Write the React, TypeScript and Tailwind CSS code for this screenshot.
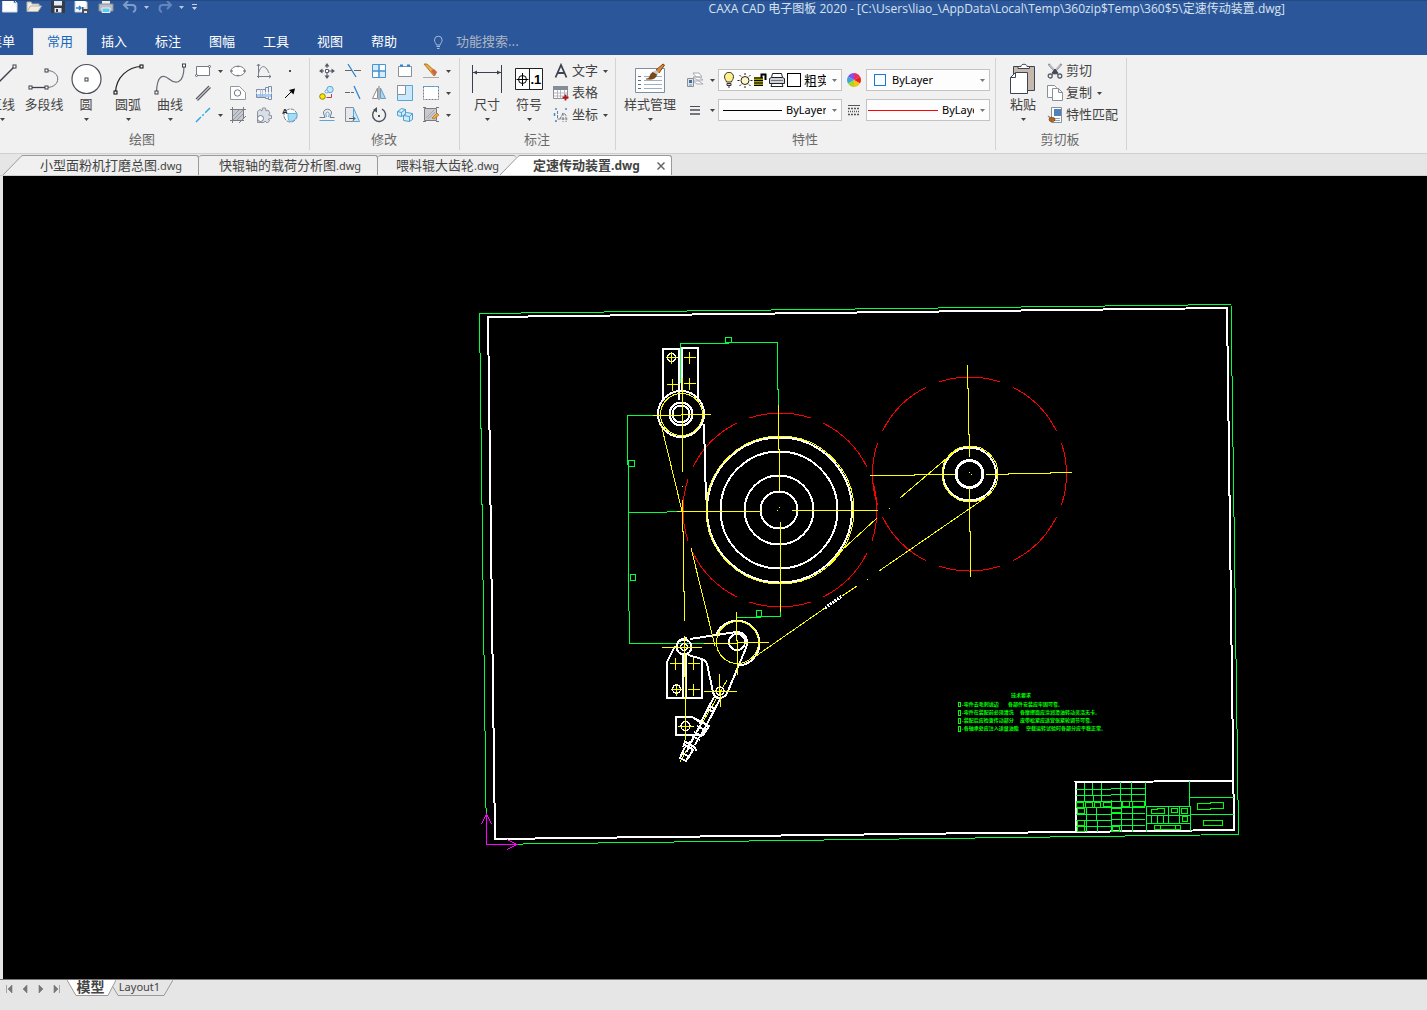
import React from 'react';
import clsx from 'clsx';

interface IconProps {
  children: React.ReactNode;
  size?: 16 | 32;
}

const Icon: React.FC<IconProps> = ({ children, size = 16 }) => (
  <svg
    viewBox={size === 16 ? '0 0 16 16' : '0 0 32 32'}
    className={clsx('shrink-0', size === 16 ? 'h-4 w-4' : 'h-8 w-8')}
    fill="none"
    stroke="#5a5f6b"
    aria-hidden="true"
  >
    {children}
  </svg>
);

const Caret: React.FC<{ className?: string }> = ({ className }) => (
  <svg viewBox="0 0 5 3" className={clsx('h-[3px] w-[5px] shrink-0', className)} aria-hidden="true">
    <path d="M0 0h5L2.5 3z" fill="currentColor" />
  </svg>
);

const Node: React.FC<{ x: number; y: number; color?: string }> = ({ x, y, color = '#3c3f4d' }) => (
  <rect x={x - 1.5} y={y - 1.5} width="3" height="3" fill="#fff" stroke={color} strokeWidth="1" />
);

// latin runs are set smaller than the Chinese around them
const Latin: React.FC<{ children: React.ReactNode }> = ({ children }) => (
  <span className="font-['Noto_Sans',sans-serif] text-[11px]">{children}</span>
);

/* ---------- large icons ---------- */

const lineIcon = (
  <Icon size={32}>
    <path d="M1 31 28 4" stroke="#3c3f4d" strokeWidth="1.5" />
    <Node x={28.5} y={3.5} />
  </Icon>
);
const polylineIcon = (
  <Icon size={32}>
    <path d="M18.500 7.500c15 0 15 17 0 17" stroke="#6a6e79" />
    <path d="M2.500 24.500h16" stroke="#3c3f4d" strokeWidth="1.300" />
    <Node x={2.5} y={24.5} />
    <Node x={18.5} y={7.5} />
    <Node x={18.5} y={24.5} />
  </Icon>
);
const circleIcon = (
  <Icon size={32}>
    <circle cx="16.500" cy="16" r="14.500" fill="#fff" stroke="#4b4f5c" strokeWidth="1.200" />
    <Node x={16.5} y={16.5} />
  </Icon>
);
const arcIcon = (
  <Icon size={32}>
    <path d="M3.500 29.500C4 14 16 4 29.500 3.500" stroke="#222" strokeWidth="1.200" />
    <Node x={3.5} y={29.5} color="#000" />
    <Node x={29.5} y={3.5} color="#000" />
  </Icon>
);
const splineIcon = (
  <Icon size={32}>
    <path d="M2.500 29.500C3 12 9 11 15 16s15 6 15-13" stroke="#666b77" strokeWidth="1.200" />
    <Node x={2.5} y={29.5} />
    <Node x={30} y={2.5} />
  </Icon>
);
const dimensionIcon = (
  <Icon size={32}>
    <path d="M1.500 2v28M30.500 2v28M2 9.500h28" stroke="#3c3f4d" />
    <path d="M2 9.500l4-2v4zM30 9.500l-4-2v4z" fill="#3c3f4d" stroke="none" />
  </Icon>
);
const symbolIcon = (
  <Icon size={32}>
    <path d="M2.500 5.500h27v21h-27zM16.500 5.500v21" fill="#fff" stroke="#222" />
    <circle cx="9.500" cy="16.500" r="4" stroke="#000" />
    <path d="M3.500 16.500h12M9.500 10v13" stroke="#000" />
    <text x="17.500" y="21" className="font-['Liberation_Sans'] text-[13px] font-bold" fill="#000" stroke="none">.1</text>
  </Icon>
);
const styleIcon = (
  <Icon size={32}>
    <path d="M1.500 5.500h29v24h-29z" fill="#fff" stroke="#7d90a3" />
    <path d="M10 13.500h18M10 17.500h18M10 21.500h18M10 25.500h18" stroke="#9fb0c2" />
    <path d="M4 13.500h4m-4 4h4m-4 4h4m-4 4h4" stroke="#5b6b80" strokeDasharray="3 1" />
    <path d="M22 7l7-6 1.500 1-5.500 8z" fill="#d98a3a" stroke="#7c4212" />
    <path d="M12 16c5 0 3-5 7-7l4 2c-1 5-5 6-11 5z" fill="#7c4a1a" stroke="#56300c" strokeWidth=".5" />
    <path d="M19 9l3-2 3 2.500-2 2z" fill="#c9c9c9" stroke="none" />
  </Icon>
);
const pasteIcon = (
  <Icon size={32}>
    <path d="M6.500 3.500h21v24h-21z" fill="#c5b9ab" stroke="#3d4555" />
    <path d="M12 3.500h2c0-3 6-3 6 0h2.500v2H11v-2z" fill="#fff" stroke="#3d4555" />
    <path d="M8.500 9.500h12v21h-17v-16z" fill="#fff" stroke="#3d4555" />
    <path d="M3.500 14.500h5v-5" stroke="#3d4555" />
  </Icon>
);

/* ---------- small icons ---------- */

const drawIcons = [
  <Icon>
    <path d="M1.500 3.500h13v9h-13z" fill="#fff" stroke="#777b87" />
    <circle cx="1.500" cy="12.500" r="1" fill="#fff" />
    <circle cx="14.500" cy="3.500" r="1" fill="#fff" />
  </Icon>,
  <Icon>
    <ellipse cx="8" cy="8" rx="7" ry="4.800" fill="#fff" stroke="#777b87" />
    <path d="M.5 7.500h2v1h-2zM13.500 7.500h2v1h-2zM7.500 3h1v1h-1zM7.500 12h1v1h-1z" fill="#777" stroke="#777" strokeWidth=".5" />
  </Icon>,
  <Icon>
    <path d="M2.500 1v14M1 13.500h14M2.500 10C5 2 9 1 13 10" stroke="#777b87" />
    <path d="M.8 3l1.700-2 1.700 2M13 11.800l2 1.700-2 1.700" stroke="#777b87" />
  </Icon>,
  <Icon>
    <path d="M7 7h2v2H7z" fill="#4a4d58" stroke="none" />
  </Icon>,
  <Icon>
    <path d="M1 14 14 1M2.500 15.500l13-13" stroke="#5a5d69" strokeWidth="1.300" />
  </Icon>,
  <Icon>
    <path d="M.5 1.500h9l6 6v7H.5z" fill="#fff" stroke="#9297a1" />
    <circle cx="7.500" cy="8" r="3.200" stroke="#777b87" />
  </Icon>,
  <Icon>
    <path d="M.5 4.500h9v8h-9zM9.500 2.500h3v11h-3zM12.500 1.500h3v13h-3z" fill="#eef4fb" stroke="#7d8da5" />
    <path d="M1 9h14v3H1z" fill="#a9cdf0" stroke="none" />
    <path d="M0 8h16" stroke="#fff" />
    <path d="M4.500 4v8M6.500 4v8" stroke="#a3b5cb" strokeWidth=".8" />
  </Icon>,
  <Icon>
    <path d="M3 13l7-7" stroke="#000" />
    <path d="M13 3.500l-1.500 6L7 5z" fill="#000" stroke="none" />
  </Icon>,
  <Icon>
    <path d="M1 15 15 1" stroke="#2aa5e0" strokeWidth="1.400" strokeDasharray="7 2 2 2" />
  </Icon>,
  <Icon>
    <path d="M2.500 2.500h11v11h-11z" fill="#c5c8ce" stroke="none" />
    <path d="M3 9l6-6M3 13 13 3M7 13l6-6" stroke="#9599a2" />
    <path d="M2.500 0v16M13.500 0v12M0 2.500h16M0 13.500h14M9 16l7-7" stroke="#777b85" />
  </Icon>,
  <Icon>
    <path d="M1.500 4.500 4 2.500l2 1.500.5-3h3l.5 3 2-1 2 3-1.500 2 3 .5v3l-3 .5 1 2-2.500 2-2-2-1 1.500H1.500z" fill="#d9dfe9" stroke="#8d929d" />
    <circle cx="4.500" cy="11.500" r="3" fill="#fff" stroke="#777b87" />
  </Icon>,
  <Icon>
    <circle cx="8.500" cy="8.500" r="6.500" fill="#fff" stroke="#777b87" strokeDasharray="4 1" />
    <path d="M6 6.500h9c0 5-3 8-7 8-2-1-2-5-2-8z" fill="#a6dcf5" stroke="#5fb4dc" />
    <text x="0" y="7" className="font-['Liberation_Sans'] text-[8px] font-bold" fill="#222" stroke="none">A</text>
  </Icon>,
];

const modifyIcons = [
  <Icon>
    <path d="M8 2v12M2 8h12" stroke="#555" strokeDasharray="3 1" />
    <path d="M8 0l2.500 3.500h-5zM8 16l2.500-3.500h-5zM0 8l3.500-2.500v5zM16 8l-3.500-2.500v5z" fill="#555a66" stroke="none" />
    <path d="M6.500 6.500h3v3h-3z" fill="#fff" />
  </Icon>,
  <Icon>
    <path d="M0 7.500h7M9 7.500h7" stroke="#666" strokeDasharray="7 1 1 1" />
    <path d="M3 1l8 13" stroke="#2e86d6" strokeWidth="1.300" />
  </Icon>,
  <Icon>
    <path d="M1.500 1.500h13v13h-13z" fill="#d5ecfb" stroke="#4a94d2" />
    <path d="M8 1.500v13M1.500 8h13" stroke="#4a94d2" strokeWidth="1.500" />
    <path d="M9 2h5v5H9zM2 9h5v5H2z" fill="#fff" stroke="none" />
  </Icon>,
  <Icon>
    <path d="M1.500 3.500h13v10h-13z" fill="#fff" stroke="#8b8f99" />
    <path d="M3 2.500h3M10 2.500h3" stroke="#2584db" strokeWidth="2" />
  </Icon>,
  <Icon>
    <path d="M1 1l3 0 9 8-2 4z" fill="#f2ab3b" stroke="#9b6a1c" strokeWidth=".8" />
    <path d="M8 8l3-2 3 3-2 4z" fill="#c76840" stroke="none" />
    <path d="M0 14.500h16" stroke="#a9a9a9" />
  </Icon>,
  <Icon>
    <circle cx="3.500" cy="11.500" r="2.800" fill="#ffe600" stroke="#8c8000" />
    <circle cx="11" cy="4.500" r="3.200" fill="#c8e6fa" stroke="#58a6d8" />
    <circle cx="7.500" cy="6.500" r="1.500" fill="#fff" stroke="#58a6d8" />
    <path d="M7.500 12.500h5V9" stroke="#b4413c" />
  </Icon>,
  <Icon>
    <path d="M0 7.500h9" stroke="#666" strokeDasharray="5 1 3 1" />
    <path d="M9 1l6 13" stroke="#2e86d6" strokeWidth="1.300" />
  </Icon>,
  <Icon>
    <path d="M6.500 3v10.500h-5z" fill="#fff" stroke="#8b8f99" />
    <path d="M9.500 3v10.500h5z" fill="#a8d6f4" stroke="#6c9ec2" />
    <path d="M8 1v14" stroke="#777" />
  </Icon>,
  <Icon>
    <path d="M.5 .5h15v15H.5z" fill="#c8eafc" stroke="#5da4d6" />
    <path d="M.5 .5h8v9h-8z" fill="#fff" stroke="#8b8f99" />
  </Icon>,
  <Icon>
    <path d="M.5 1.500h15v13H.5z" fill="#fff" stroke="#777b87" strokeDasharray="2 1" />
    <path d="M.5 1.500h15" stroke="#4ca0e0" strokeDasharray="3 1" />
  </Icon>,
  <Icon>
    <path d="M.5 10.500H6L4.500 6c0-5 8-5 8 0L11 10.500h4.500" stroke="#777b87" />
    <path d="M.5 13.500h15M7.500 10c-1-3-1-5 1-5s2 2 1 5" stroke="#5aa5d6" />
  </Icon>,
  <Icon>
    <path d="M.5 .5h8v14h-8z" fill="#e6e8ec" stroke="#8b8f99" />
    <path d="M8.500 1l6 13.500h-6z" fill="#c8eafc" stroke="#5da4d6" />
    <path d="M4 11.500h6m-2-2 2 2-2 2" stroke="#555" />
  </Icon>,
  <Icon>
    <path d="M4 3a6.500 6.500 0 1 0 7-.8" stroke="#4c505c" strokeWidth="1.400" />
    <path d="M6 0v5.500L2 3z" fill="#4c505c" stroke="none" />
    <path d="M7 8h2v2H7z" fill="#4c505c" stroke="none" />
  </Icon>,
  <Icon>
    <path d="M.5 4.500l4-3 4 1v5l-4 2-4-1zM6.500 8.500l3-3 6 1v6l-3 2-6-1z" fill="#d2ecfb" stroke="#4c9ed2" />
    <path d="M6.500 8.500l6 1v5M12.500 9.500l3-3M.5 4.500l4 1v4M4.500 5.500l4-3" stroke="#4c9ed2" />
  </Icon>,
  <Icon>
    <path d="M1.500 1.500h12v12h-12z" fill="#c9c9cb" stroke="#777b87" />
    <path d="M0 .5h3M13 .5h3M0 14.500h3M13 14.500h3" stroke="#777" />
    <path d="M3 11l8-8M5 12l7-7" stroke="#a5a5a8" />
    <path d="M9 11l5-5 2 2-5 4z" fill="#f0aa3c" stroke="#a2702a" strokeWidth=".7" />
  </Icon>,
];

const letterIcon = (
  <Icon>
    <path d="M2.500 14.500 8 2l5.500 12.500M4.500 10h7" stroke="#3f4350" strokeWidth="1.800" />
  </Icon>
);
const tableIcon = (
  <Icon>
    <path d="M.5 1.500h14v12H.5z" fill="#fff" stroke="#8b8f99" />
    <path d="M0 1h15v4H0z" fill="#848c98" stroke="none" />
    <path d="M1 8h13M1 11h13M4.500 5v9M7.500 5v9M11.500 5v9" stroke="#a4a8b0" strokeWidth=".8" />
    <path d="M12.500 9.500v6M9.500 12.500h6" stroke="#b01818" strokeWidth="1.800" />
  </Icon>
);
const coordIcon = (
  <Icon>
    <path d="M4.500 4v8h10M2 14.500h1M7 12l3-6 3 2v7M10 6v9" stroke="#777b87" strokeDasharray="3 1" />
    <path d="M2 2h2M12 2h2M1.500 6v3M2 14h2" stroke="#3f8fd0" strokeWidth="1.500" />
  </Icon>
);
const cutIcon = (
  <Icon>
    <path d="M1.500 1l10 11M14.500 1l-10 11" stroke="#8b8f99" strokeWidth="2" />
    <path d="M2.500 2l9 9M13.500 2l-9 9" stroke="#f7f7f7" strokeWidth=".8" />
    <path d="M5 10l3-4 3 4-3 1z" fill="#444854" stroke="#444854" />
    <circle cx="3.200" cy="13" r="2" strokeWidth="1.300" />
    <circle cx="12.800" cy="13" r="2" strokeWidth="1.300" />
  </Icon>
);
const copyIcon = (
  <Icon>
    <path d="M.5 .5h7l2 2v10h-9z" fill="#fff" stroke="#8b8f99" />
    <path d="M5.500 3.500h6l4 4v8h-10zM11.500 3.500v4h4" fill="#fff" stroke="#8b8f99" />
  </Icon>
);
const matchIcon = (
  <Icon>
    <path d="M4.500 .5h10v15h-10z" fill="#fff" stroke="#8b8f99" />
    <path d="M7 2h7v7H7z" fill="#4f82bd" stroke="none" />
    <path d="M7 11.500h6M7 13.500h6" stroke="#8aa4c0" />
    <path d="M1 9l4 3" stroke="#8a8a8a" strokeWidth="1.500" />
    <ellipse cx="5" cy="12.500" rx="3" ry="2.200" fill="#b0651b" stroke="#7b410a" strokeWidth=".6" />
  </Icon>
);

const layerIcon = (
  <Icon>
    <path d="M6 1h6l3 4H9zM6 5h6l4 3h-6zM6 9h6l4 3h-6z" fill="#fff" stroke="#9da1aa" strokeWidth=".9" />
    <path d="M.5 6.500h6v8h-6z" fill="#dfe3ea" stroke="#8b8f99" />
    <path d="M2 8h3v3H2z" fill="#3c6ea8" stroke="none" />
    <path d="M2 13h3" stroke="#8b8f99" />
  </Icon>
);
const linesIcon = (
  <Icon>
    <path d="M3 4.500h10" stroke="#4b4e58" />
    <path d="M3 8h10M3 12h10" stroke="#4b4e58" strokeWidth="1.500" />
  </Icon>
);
const wheelSlices = [
  { color: '#e52e6a', d: 'M8 8V1a7 7 0 0 1 6 3.500z' },
  { color: '#e8231c', d: 'M8 8l6-3.500a7 7 0 0 1 0 7z' },
  { color: '#f5c21c', d: 'M8 8l6 3.500A7 7 0 0 1 8 15z' },
  { color: '#a8d822', d: 'M8 8v7a7 7 0 0 1-6-3.500z' },
  { color: '#35a8d8', d: 'M8 8l-6 3.500a7 7 0 0 1 0-7z' },
  { color: '#8a4fe6', d: 'M8 8 2 4.500A7 7 0 0 1 8 1z' },
];
const wheelIcon = (
  <Icon>
    {wheelSlices.map(({ color, d }) => (
      <path key={color} d={d} fill={color} stroke="none" />
    ))}
  </Icon>
);
const linetypeIcon = (
  <Icon>
    <path d="M2 3.500h12" stroke="#555" />
    <path d="M2 6.500h12M2 12.500h12" stroke="#555" strokeWidth="1.400" strokeDasharray="2 1" />
    <path d="M2 9.500h12" stroke="#555" strokeWidth="1.400" strokeDasharray="1 1" />
  </Icon>
);
const bulbIcon = (
  <Icon>
    <path d="M5.500 10C5 8 3.500 7 3.500 4.800a4.500 4.500 0 0 1 9 0C12.500 7 11 8 10.500 10z" fill="#fff08a" stroke="#333" />
    <path d="M6 11.500h4v2H6zM7 15h2" fill="#ddd" stroke="#333" />
  </Icon>
);
const sunIcon = (
  <Icon>
    <circle cx="8" cy="8.500" r="4" fill="#fff7c8" stroke="#222" />
    <path d="M8 1v2M8 14v2M.5 8.500h2M13.500 8.500h2M2.500 3l1.500 1.500M12 12.500l1.500 1.500M13.500 3 12 4.500M4 12.500 2.500 14" stroke="#222" />
  </Icon>
);
const lockIcon = (
  <Icon>
    <path d="M1 5h9v9H1z" fill="#a0a000" stroke="none" />
    <path d="M1 6h9M1 8.500h9M1 11h9M1 13.500h9" stroke="#000" strokeWidth="1.200" />
    <path d="M8.500 6V2.500h4V8" stroke="#000" strokeWidth="2" />
  </Icon>
);
const printIcon = (
  <Icon>
    <path d="M3.500 1.500h9l1 4h-11z" fill="#fff" stroke="#222" />
    <path d="M.5 6.500l2-1h11l2 1v5h-15z" fill="#cfd3da" stroke="#222" />
    <path d="M3 11.500h10l1 3H2z" fill="#fff" stroke="#222" />
    <path d="M2 8.500h12" stroke="#777" />
  </Icon>
);

/* ---------- title bar ---------- */

const quickActions = [
  {
    name: '新建',
    icon: <path d="M.5 .5h11l3.500 3.500v9H.5zM11.500 .5v3.500h3.500" fill="#fff" stroke="#d5dbe6" />,
  },
  {
    name: '打开',
    icon: <path d="M1 12V3h4l1 2h7v2M1 12.500 4.500 7h11L12 12.500z" fill="#f4ecdc" stroke="#b5b5b5" />,
  },
  {
    name: '保存',
    icon: (
      <>
        <path d="M1.500 1h13v12.500h-13z" fill="#353a48" stroke="#353a48" />
        <path d="M4 1h8v5.500H4zM4.500 9h7v4.500h-7z" fill="#e7eaf0" stroke="none" />
        <path d="M6 10h2v3H6z" fill="#353a48" stroke="none" />
      </>
    ),
  },
  {
    name: '另存为',
    icon: (
      <>
        <path d="M1 .5h9l3 3V13H1z" fill="#fff" stroke="#c5cad2" />
        <path d="M2 9h5m-2-2 2 2-2 2" stroke="#2f7fd1" strokeWidth="1.500" />
        <path d="M8 8h7v6H8z" fill="#4a4f5b" stroke="none" />
        <path d="M9.500 8h4v2h-4zM10 12h3v2h-3z" fill="#e3e3e3" stroke="none" />
      </>
    ),
  },
  {
    name: '打印',
    icon: (
      <>
        <path d="M4 0h8v5H4z" fill="#f2eee7" stroke="none" />
        <path d="M1 5h14v7H1z" fill="#b9bdc4" stroke="#8b8f97" />
        <path d="M4 9h8v4.500H4z" fill="#5bcbf2" stroke="#e9eef3" />
      </>
    ),
  },
];

const TitleBar: React.FC = () => (
  <header className="flex h-7 items-start overflow-hidden border-t border-[#244a83] text-[#d9e2f0]">
    <div className="flex h-3 min-w-0 flex-1 items-center gap-2 pl-[2px]">
      {quickActions.map((action) => (
        <button key={action.name} type="button" aria-label={action.name}>
          <Icon>{action.icon}</Icon>
        </button>
      ))}
      <button type="button" aria-label="撤销" className="flex items-center gap-[6px]">
        <Icon>
          <path d="M6 2 2 6l4 4M2.500 6H10c5 0 4 6 1 7" stroke="#7f9bc9" strokeWidth="2" />
        </Icon>
        <Caret className="text-[#b9c8e0]" />
      </button>
      <button type="button" aria-label="重做" className="flex items-center gap-[6px]">
        <Icon>
          <path d="M10 2l4 4-4 4M13.500 6H6c-5 0-4 6-1 7" stroke="#6486bd" strokeWidth="2" />
        </Icon>
        <Caret className="text-[#b9c8e0]" />
      </button>
      <button type="button" aria-label="自定义" className="flex flex-col items-center gap-[2px]">
        <span className="h-px w-[5px] bg-[#c8d3e6]" />
        <Caret className="text-[#c8d3e6]" />
      </button>
    </div>
    <h1 className="shrink-0 pr-[142px] font-['Open_Sans','Noto_Sans_CJK_SC',sans-serif] text-[12px] leading-4 whitespace-nowrap">
      CAXA CAD 电子图板 2020 - [C:\Users\liao_\AppData\Local\Temp\360zip$Temp\360$5\定速传动装置.dwg]
    </h1>
  </header>
);

const menus = ['插入', '标注', '图幅', '工具', '视图', '帮助'];

const MenuBar: React.FC = () => (
  <nav className="-ml-[25px] flex h-[27px] items-stretch text-white">
    <button type="button" className="mr-1 w-[54px] pb-[2px]">菜单</button>
    <button type="button" className="w-[54px] border border-b-0 border-[#d9dde5] bg-[#f1f1f1] pb-[2px] text-[#1768c0]">常用</button>
    {menus.map((menu) => (
      <button key={menu} type="button" className="w-[54px] pb-[2px]">{menu}</button>
    ))}
    <div className="ml-[19px] flex items-center gap-[10px]">
      <Icon>
        <path d="M6.500 11C6 9 4.500 8.500 4.500 6a3.800 3.800 0 0 1 7.600 0c0 2.500-1.600 3-2 5zM6.500 12.500h3.500M7 14.500h2.500" stroke="#a9b9d6" />
      </Icon>
      <input aria-label="功能搜索" placeholder="功能搜索..." className="w-24 bg-transparent pb-[2px] outline-none placeholder:text-[#aeb6c3]" />
    </div>
  </nav>
);

/* ---------- ribbon ---------- */

interface ToolProps {
  icon: React.ReactNode;
  label: string;
  caret?: boolean;
  wide?: boolean;
}

const BigTool: React.FC<ToolProps> = ({ icon, label, caret = true, wide = false }) => (
  <button type="button" className={clsx('flex flex-col items-center pt-[3px] whitespace-nowrap', wide ? 'w-[60px]' : 'w-[42px]')}>
    {icon}
    <span className="mt-px leading-4">{label}</span>
    {caret && <Caret className="mt-[6px]" />}
  </button>
);

const RowTool: React.FC<ToolProps> = ({ icon, label, caret = false }) => (
  <button type="button" className="flex h-[22px] items-center gap-[3px] whitespace-nowrap">
    {icon}
    <span className="pb-[2px]">{label}</span>
    {caret && <Caret className="ml-[2px]" />}
  </button>
);

const Group: React.FC<{ title: string; className?: string; children: React.ReactNode }> = ({ title, className, children }) => (
  <section className={clsx('flex flex-col border-r border-[#d4d4d4] pt-[2px]', className)}>
    <div className="flex h-[70px]">{children}</div>
    <h2 className="mt-px text-center leading-4 text-[#6a6a6a]">{title}</h2>
  </section>
);

interface ComboProps {
  name: string;
  value: string;
  className?: string;
  children: React.ReactNode;
}

const Combo: React.FC<ComboProps> = ({ name, value, className = "font-['Noto_Sans',sans-serif] text-[11px]", children }) => (
  <div className="flex h-[22px] w-[124px] items-center border border-[#c3c3c3] bg-[#fdfdfd] text-black">
    {children}
    <select aria-label={name} className={clsx('h-full min-w-0 flex-1 appearance-none overflow-hidden bg-transparent outline-none', className)}>
      <option>{value}</option>
    </select>
    <Caret className="mr-1 ml-[6px] text-[#777]" />
  </div>
);

const Ribbon: React.FC = () => (
  <div className="flex h-[99px] items-stretch overflow-hidden border-b border-[#d0d0d0] bg-[#f1f1f1] py-[3px] text-[#444]">
    <Group title="绘图" className="-ml-[25px] pr-[6px] pl-[6px]">
      <BigTool icon={lineIcon} label="直线" />
      <BigTool icon={polylineIcon} label="多段线" caret={false} />
      <BigTool icon={circleIcon} label="圆" />
      <BigTool icon={arcIcon} label="圆弧" />
      <BigTool icon={splineIcon} label="曲线" />
      <div className="grid h-[66px] grid-cols-[34px_26px_26px_26px] grid-rows-3">
        {drawIcons.map((icon, i) => (
          <button
            key={i}
            type="button"
            aria-label={`绘图工具 ${i + 1}`}
            className={clsx('flex items-center', i % 4 === 0 ? 'gap-[7px] pl-1' : 'justify-center')}
          >
            {icon}
            {(i === 0 || i === 8) && <Caret />}
          </button>
        ))}
      </div>
    </Group>

    <Group title="修改" className="pr-[5px] pl-1">
      <div className="grid h-[66px] grid-cols-[26px_26px_26px_26px_36px] grid-rows-3">
        {modifyIcons.map((icon, i) => (
          <button
            key={i}
            type="button"
            aria-label={`修改工具 ${i + 1}`}
            className={clsx('flex items-center', i % 5 === 4 ? 'gap-[7px] pl-[5px]' : 'justify-center')}
          >
            {icon}
            {i % 5 === 4 && <Caret />}
          </button>
        ))}
      </div>
    </Group>

    <Group title="标注" className="pr-[7px] pl-[6px]">
      <BigTool icon={dimensionIcon} label="尺寸" />
      <BigTool icon={symbolIcon} label="符号" />
      <div className="flex flex-col pl-[3px]">
        <RowTool icon={letterIcon} label="文字" caret />
        <RowTool icon={tableIcon} label="表格" />
        <RowTool icon={coordIcon} label="坐标" caret />
      </div>
    </Group>

    <Group title="特性" className="pr-[5px] pl-1">
      <BigTool icon={styleIcon} label="样式管理" wide />
      <div className="flex flex-col gap-2 pt-[9px] pl-[7px]">
        <div className="flex items-center">
          <button type="button" aria-label="图层管理" className="flex w-[31px] items-center gap-[7px]">
            {layerIcon}
            <Caret />
          </button>
          <Combo name="图层" value="粗实线" className="pb-px">
            <span className="flex w-[85px] shrink-0 items-center pl-[2px]">
              {bulbIcon}
              {sunIcon}
              {lockIcon}
              {printIcon}
              <span className="ml-[2px] h-[14px] w-[14px] border border-black bg-white" />
            </span>
          </Combo>
          <span className="flex w-6 justify-center">{wheelIcon}</span>
          <Combo name="颜色" value="ByLayer">
            <span className="mr-[6px] ml-[7px] h-3 w-3 shrink-0 border border-[#1679d3]" />
          </Combo>
        </div>
        <div className="flex items-center">
          <button type="button" aria-label="线型管理" className="flex w-[31px] items-center gap-[7px]">
            {linesIcon}
            <Caret />
          </button>
          <Combo name="线型" value="ByLayer">
            <span className="mr-1 ml-1 h-px w-[59px] shrink-0 bg-black" />
          </Combo>
          <span className="flex w-6 justify-center">{linetypeIcon}</span>
          <Combo name="线宽" value="ByLayer">
            <span className="mr-1 ml-px h-px w-[70px] shrink-0 bg-[#f00]" />
          </Combo>
        </div>
      </div>
    </Group>

    <Group title="剪切板" className="pr-2 pl-[6px]">
      <BigTool icon={pasteIcon} label="粘贴" />
      <div className="flex flex-col pl-[3px]">
        <RowTool icon={cutIcon} label="剪切" />
        <RowTool icon={copyIcon} label="复制" caret />
        <RowTool icon={matchIcon} label="特性匹配" />
      </div>
    </Group>
  </div>
);

/* ---------- document tabs ---------- */

const Slant: React.FC<{ fill: string }> = ({ fill }) => (
  <svg viewBox="0 0 20 20" className="h-5 w-5 shrink-0" aria-hidden="true">
    <path d="M0 20 18 1.500Q19 .5 20 .5V20z" fill={fill} />
    <path d="M0 20 18 1.500Q19 .5 20 .5" fill="none" stroke="#9a9a9a" />
  </svg>
);

const DocumentTabs: React.FC = () => (
  <div className="flex h-[22px] items-end border-b border-[#cfcfcf] pl-[3px] text-[#444]">
    <button type="button" className="flex">
      <Slant fill="#f0f0f0" />
      <span className="h-5 w-[176px] rounded-tr-[3px] border-t border-r border-[#9a9a9a] bg-[#f0f0f0] pl-[17px] text-left">
        小型面粉机打磨总图<Latin>.dwg</Latin>
      </span>
    </button>
    <button type="button" className="h-5 w-[179px] rounded-t-[3px] border-t border-r border-[#9a9a9a] bg-[#f0f0f0] pl-5 text-left">
      快辊轴的载荷分析图<Latin>.dwg</Latin>
    </button>
    <button type="button" className="h-5 w-[138px] rounded-t-[3px] border-t border-[#9a9a9a] bg-[#f0f0f0] pl-[18px] text-left">
      喂料辊大齿轮<Latin>.dwg</Latin>
    </button>
    <div className="-ml-4 flex">
      <Slant fill="#fff" />
      <div className="flex h-5 w-[152px] items-center justify-between rounded-tr-[3px] border-t border-r border-[#9a9a9a] bg-white pr-[6px] pl-[13px]">
        <button type="button" className="pb-px font-bold">
          定速传动装置<span className="font-['Noto_Sans',sans-serif] text-[12px]">.dwg</span>
        </button>
        <button type="button" aria-label="关闭">
          <svg viewBox="0 0 8 8" className="h-2 w-2" aria-hidden="true">
            <path d="M.5 .5l7 7M7.500 .5l-7 7" stroke="#666" strokeWidth="1.500" />
          </svg>
        </button>
      </div>
    </div>
  </div>
);

/* ---------- drawing ---------- */

const Cross: React.FC<{ x: number; y: number; r?: number }> = ({ x, y, r = 6 }) => (
  <path d={`M${x - r} ${y}h${r * 2}M${x} ${y - r}v${r * 2}`} />
);

const notes = [
  { y: 706, first: '零件去毛刺锐边', x: 1008, second: '各部件安装应牢固可靠。' },
  { y: 714, first: '零件在装配前必须清洗', x: 1020, second: '各摩擦面应涂润滑油转动灵活无卡。' },
  { y: 722, first: '装配后应检查传动部分', x: 1020, second: '皮带松紧应适宜张紧轮调节可靠。' },
  { y: 730, first: '各轴承处应注入适量油脂', x: 1026, second: '空载运转试验时各部分应平稳正常。' },
];

const Drawing: React.FC = () => (
  <svg
    viewBox="3 176 1424 803"
    preserveAspectRatio="xMinYMin meet"
    className="ml-[3px] min-h-0 flex-1 bg-black"
    fill="none"
    shapeRendering="crispEdges"
    role="img"
    aria-label="定速传动装置"
  >
    {/* sheet border */}
    <path d="M479.500 313.500 1231 304.500 1238.500 834.500 486.500 844.500z" stroke="#00ff40" />
    <path d="M488 317 1227 308 1234 830 495 839z" stroke="#fff" strokeWidth="2" />

    {/* origin axes */}
    <path d="M486.500 814v30.500h31M481.500 824l5-10 5 10M507 839.500l10 5-10 5" stroke="#f0f" />

    {/* dimensions */}
    <g stroke="#00ff40">
      <path d="M680.500 383v-40h48v-1h49v31l1 32M725.500 337.500h6v5h-6z" />
      <path d="M653 415.500h-26v49h1v81l1 65 1 33H704M628 512.500h24l30-1" />
      <path d="M628.500 460.500h6v6h-6zM630.500 574.500h5v6h-5z" />
      <path d="M736.500 617.500h24v-1h20v-5M756.500 610.500h5v6h-5z" />
    </g>

    {/* pitch circles */}
    <g stroke="#f00">
      <circle cx="780" cy="510" r="97" pathLength="360" strokeDasharray="37 8" strokeDashoffset="18.5" />
      <circle cx="969.5" cy="474" r="97" pathLength="360" strokeDasharray="37 8" strokeDashoffset="18.5" />
    </g>

    {/* part outlines */}
    <path d="M727 680l-47 82" stroke="#ff0" />
    <g stroke="#fff" strokeWidth="2">
      <path d="M663 400v-51h16v51M682 391v-43h16v52M704 424l2 76" />
      <circle cx="671.500" cy="357.500" r="4" strokeWidth="1.500" />
      <circle cx="681" cy="414" r="23" />
      <circle cx="681" cy="414" r="11.500" />
      <circle cx="681" cy="414" r="8.500" />

      <circle cx="779.500" cy="510" r="72.500" />
      <circle cx="779" cy="510" r="58.500" />
      <circle cx="779" cy="510" r="34.500" />
      <circle cx="779" cy="510" r="18.500" />

      <circle cx="969.500" cy="474" r="26.500" />
      <circle cx="969.500" cy="474" r="13.500" strokeWidth="3" />
      <path d="M825 608l17-12" strokeWidth="3" strokeDasharray="2 1" />

      <path d="M716 635a22.500 22.500 0 1 1 24 30.500" />
      <circle cx="737" cy="642" r="8" />
      <path d="M690 639l46-7c9 0 13 7 10 16l-18 43c-3 9-13 9-15 1l-6-28c-1-3-3-4-5-5l-14-4" />
      <circle cx="684" cy="647" r="7.500" />
      <circle cx="684" cy="647" r="3.500" strokeWidth="1.500" />
      <path d="M675 646l-8 16v36h35v-39M683 655v43M686 655v43M677 646q0-7 10-8" />
      <circle cx="676.500" cy="689" r="4" strokeWidth="1.500" />
      <circle cx="720" cy="691" r="4" strokeWidth="1.500" />
      <circle cx="685.500" cy="726" r="4.500" strokeWidth="1.500" />

      <path d="M714 697l-14 27M720 699l-14 27M709 706l7 3M707 709l7 3" />
      <path d="M692 717h-16v18h27l6-9-17-9 8 5" />
      <path d="M702 722l-7 13M706 726l-6 11M697 726l8 4M694 732l8 4M692 736l8 4" />
      <path d="M684 741l12 7M683 744l11 6M685 742l-2 5M695 747l1 4M685 747l-5 11 6 3 7-11M682 753l8 4M690 741l-3 11" />
      <path d="M695 735l-5 9M699 737l-4 8" />
    </g>

    {/* centre lines and belt */}
    <g stroke="#ff0">
      <path d="M653 415.500h28M681 414.500h30M682.500 378v94M682.500 486v1M682.500 500v31h1v60h1v30" />
      <path d="M677 511.500h85M792 510.500h86M778.500 405v44h1v42M780.500 522v90M777 510.500h1M779 507.500h1" />
      <path d="M870 475.500h44v-1h41M986 474.500h22v-1h42v-1h22M967.500 365v23h1v46h1v23M969.500 488v43h1v46M969 472.500h1M971 474.500h1" />
      <path d="M661 424l21 87M683 533h1M691 548l24 98M960 447l-60 51M889 508.500h1M877 518l-36 33-12 14" />
      <path d="M985 498 879 571M867 579.500h1M857 586l-15 10M825 608l-69 48" />
      <path d="M736.500 612v28h1v35M704 643.500h33v-1h32M662 647.500h40M684.500 636v40h1v64" />
      <path d="M704 691.500h33M719.500 674v16h1v17" />
      <circle cx="681.500" cy="414.500" r="21" />
      <circle cx="780" cy="510" r="74" />
      <circle cx="970" cy="474" r="28" />
      <circle cx="737.500" cy="642.500" r="21" />
      <Cross x={671.5} y={357.5} />
      <Cross x={689.5} y={357.5} />
      <Cross x={672.5} y={384.5} />
      <Cross x={689.5} y={383.5} />
      <Cross x={675.5} y={663.5} />
      <Cross x={693.5} y={663.5} />
      <Cross x={676.5} y={689.5} />
      <Cross x={693.5} y={689.5} />
      <Cross x={685.5} y={726.5} r={8} />
    </g>

    {/* title block */}
    <path d="M1075.500 831v-48.500l158-2" stroke="#fff" strokeWidth="2" />
    <g stroke="#00ff40">
      <path d="M1076 789.500h35M1076 795.500h35M1076 801.500h35M1076 807.500h35M1076 814.500h35M1076 820.500h35M1076 826.500h35" />
      <path d="M1111 788.500h34M1111 794.500h34M1111 801.500h34M1111 807.500h34M1111 813.500h34M1111 819.500h34M1111 825.500h34" />
      <path d="M1084.500 783v18M1092.500 783v12M1093.500 795v6M1101.500 783v18M1086.500 808v24M1096.500 808v12M1097.500 820v12" />
      <path d="M1111.500 800v32M1120.500 782v20M1121.500 802v30M1131.500 782v20M1132.500 802v30M1145.500 782v24M1146.500 806v26" />
      <path d="M1146 806.500h44M1146 815.500h44M1146 823.500h44M1168.500 806v17M1179.500 806v17M1151.500 815v8M1157.500 815v8M1163.500 815v8" />
      <path d="M1189.500 781v25h1v25M1190 797.500h44M1190 814.500h44" />
    </g>
    <g stroke="#00ff00">
      <path d="M1076.500 802.500h7v5h-7zM1085.500 802.500h7v5h-7zM1094.500 802.500h6v5h-6zM1103.500 802.500h8v4h-8zM1122.500 801.500h7v5h-7zM1132.500 801.500h12v5h-12z" />
      <path d="M1077.500 808.500h7v5h-7zM1111.500 808.500h10v4h-10zM1077.500 820.500h7v5h-7zM1077.500 826.500h7v5h-7zM1112.500 826.500h7v5h-7z" />
      <path d="M1151.500 809.500h6v-1h7v5h-13zM1171.500 808.500h6v4h-6zM1181.500 808.500h6v5h-6zM1182.500 816.500h5v5h-5zM1154.500 825.500h26v4h-26zM1160.500 825v4M1175.500 825v4" />
      <path d="M1197.500 803.500h13v-1h13v6h-13v1h-13zM1203.500 820.500h19v5h-19z" />
      <path d="M958.500 702.500h2v4h-2zM958.500 710.500h2v5h-2zM958.500 718.500h2v5h-2zM958.500 726.500h2v5h-2z" />
    </g>
    <g fill="#00ff00" className="font-['Noto_Sans_CJK_SC',sans-serif] text-[5px] font-bold">
      <text x="1011" y="697">技术要求</text>
      {notes.map((note) => (
        <React.Fragment key={note.y}>
          <text x="962" y={note.y}>.{note.first}</text>
          <text x={note.x} y={note.y}>{note.second}</text>
        </React.Fragment>
      ))}
    </g>
  </svg>
);

/* ---------- layout tabs ---------- */

const navPaths = ['M1.500 0v8M7 0v8L3 4z', 'M6 0v8L2 4z', 'M2 0v8l4-4z', 'M6.500 0v8M1 0v8l4-4z'];

const LayoutTabs: React.FC = () => (
  <footer className="flex h-[31px] items-start border-t border-[#777] text-[#444]">
    <div className="flex h-[17px] w-[67px] items-center gap-2 pl-[5px]">
      {navPaths.map((d) => (
        <button key={d} type="button" aria-label="切换布局">
          <svg viewBox="0 0 8 8" className="h-2 w-2" aria-hidden="true">
            <path d={d} fill="#777" stroke="#777" strokeWidth=".6" />
          </svg>
        </button>
      ))}
    </div>
    <button type="button" className="relative flex h-4 w-[49px] justify-center pr-[2px] text-[14px] leading-3 font-bold">
      <svg viewBox="0 0 49 16" className="absolute inset-0 h-4 w-[49px]" aria-hidden="true">
        <path d="M0 0l9 15.500h32L49 0" fill="#fff" stroke="#9a9a9a" />
      </svg>
      <span className="relative">模型</span>
    </button>
    <button type="button" className="relative -ml-1 flex h-4 w-[61px] justify-center pr-[6px] leading-[14px]">
      <svg viewBox="0 0 61 16" className="absolute inset-0 h-4 w-[61px]" aria-hidden="true">
        <path d="M1 7l5 8.500h46L61 0" fill="none" stroke="#9a9a9a" />
      </svg>
      <span className="relative font-['Noto_Sans',sans-serif] text-[11px]">Layout1</span>
    </button>
  </footer>
);

const App: React.FC = () => {
  return (
    <div className="flex h-screen flex-col overflow-hidden bg-[#e6e6e6] font-['Noto_Sans_CJK_SC',sans-serif] text-[13px] leading-[18px]">
      <div className="bg-[#2b579a]">
        <TitleBar />
        <MenuBar />
      </div>
      <Ribbon />
      <DocumentTabs />
      <Drawing />
      <LayoutTabs />
    </div>
  );
};

export default App;
